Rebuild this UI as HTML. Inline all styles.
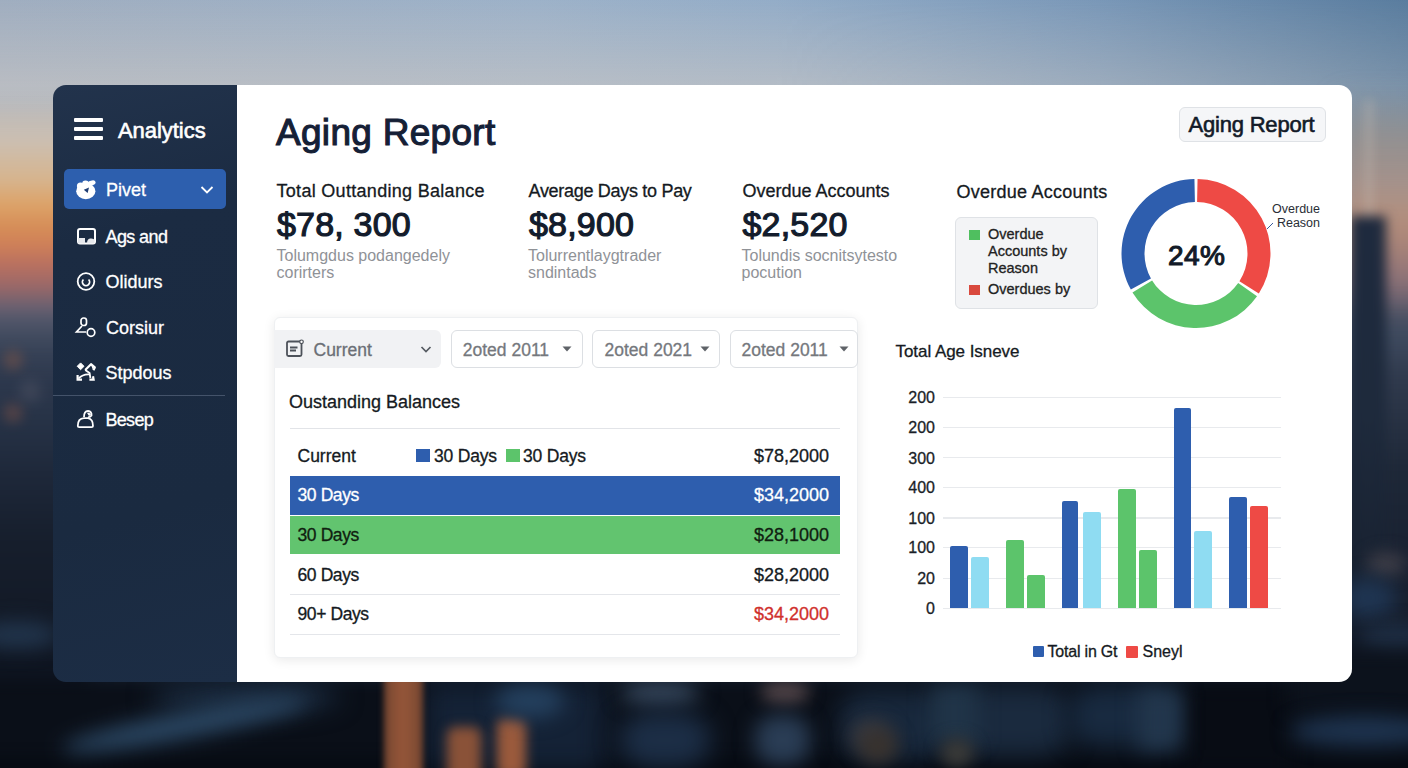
<!DOCTYPE html>
<html><head><meta charset="utf-8">
<style>
*{margin:0;padding:0;box-sizing:border-box}
html,body{width:1408px;height:768px;overflow:hidden;background:#0f1826}
body{position:relative;font-family:"Liberation Sans",sans-serif}
#bg{position:absolute;left:0;top:0;width:1408px;height:768px;overflow:hidden;background:#16202f}
.b{position:absolute}
.t{position:absolute;line-height:1;white-space:nowrap;-webkit-text-stroke-width:.3px}
#side{position:absolute;left:53px;top:85px;width:184px;height:597px;background:linear-gradient(165deg,#22334c 0%,#1b2b42 25%,#1a2a40 70%,#1c2d45 100%);border-radius:13px 0 0 13px}
#main{position:absolute;left:237px;top:85px;width:1115px;height:597px;background:#fff;border-radius:0 13px 13px 0}
</style></head><body>
<div id="bg">
<div class="b" style="left:0;top:0;width:1408px;height:330px;background:linear-gradient(90deg,#a0aec0 0%,#9db2c9 38%,#94adc8 55%,#7a98b8 78%,#5a7d9f 100%)"></div>
<div class="b" style="left:0;top:0;width:1408px;height:330px;background:linear-gradient(180deg,rgba(205,200,196,0) 0px,rgba(205,200,196,.55) 85px,rgba(200,190,180,.6) 140px);-webkit-mask-image:linear-gradient(90deg,#000 0%,#000 55%,rgba(0,0,0,.5) 100%)"></div>
<div class="b" style="left:-40px;top:100px;width:200px;height:290px;filter:blur(5px);background:linear-gradient(180deg,rgba(185,188,192,0) 0px,#c4bcb4 25px,#cbbfb2 40px,#d6b48e 79px,#dca268 105px,#d68e58 126px,#cf8058 144px,#b87060 165px,#9a6868 186px,#6a6070 207px,#4e5468 222px,#3e485c 240px,#343f54 260px,#2f3a4f 290px)"></div>
<div class="b" style="left:1336px;top:90px;width:130px;height:290px;filter:blur(12px);background:linear-gradient(180deg,rgba(130,135,145,0) 0px,rgba(150,144,140,.8) 45px,#a8928a 100px,#b4907e 125px,#ac8678 150px,#8e7278 190px,#5e5c6c 222px,#404a5e 252px,#36425a 290px)"></div>
<div class="b" style="left:1364px;top:100px;width:10px;height:130px;filter:blur(5px);background:rgba(200,190,180,.3)"></div>
<div class="b" style="left:-60px;top:372px;width:150px;height:460px;filter:blur(10px);background:linear-gradient(180deg,#2f3a4f 0px,#263246 50px,#1e283a 100px,#161e2c 168px,#131a27 240px,#0e1420 300px,#0b111b 400px)"></div>
<div class="b" style="left:1320px;top:300px;width:126px;height:510px;filter:blur(8px);background:linear-gradient(180deg,rgba(70,76,90,0) 0px,#3e4a5e 40px,#323c50 70px,#2a3446 110px,#1e2838 170px,#1a2232 250px,#161e2c 330px,#121a26 420px)"></div>
<div class="b" style="left:1350px;top:216px;width:36px;height:600px;filter:blur(6px);background:linear-gradient(180deg,#1e2a3e 0px,#1e2a3c 200px,#1a2434 320px,#141c2a 420px,#0e1520 500px)"></div>
<div class="b" style="left:-25px;top:622px;width:85px;height:26px;border-radius:50%;background:#22364e;filter:blur(10px)"></div>
<div class="b" style="left:3px;top:350px;width:20px;height:20px;border-radius:50%;background:#7a5448;filter:blur(6px);opacity:.55"></div>
<div class="b" style="left:3px;top:403px;width:20px;height:20px;border-radius:50%;background:#7a5046;filter:blur(6px);opacity:.5"></div>
<div class="b" style="left:20px;top:380px;width:20px;height:22px;border-radius:50%;background:#4e5262;filter:blur(7px);opacity:.6"></div>
<div class="b" style="left:1366px;top:552px;width:40px;height:24px;border-radius:50%;background:#3c3c46;filter:blur(8px)"></div>
<div class="b" style="left:1340px;top:578px;width:56px;height:40px;border-radius:50%;background:#1f3552;filter:blur(10px)"></div>
<div class="b" style="left:1360px;top:624px;width:70px;height:28px;border-radius:50%;background:#1e2e44;filter:blur(9px)"></div>
<div class="b" style="left:-40px;top:680px;width:1500px;height:120px;background:#0a0f18;filter:blur(8px)"></div>
<div class="b" style="left:-20px;top:756px;width:1450px;height:30px;background:#070b13;filter:blur(6px)"></div>
<div class="b" style="left:150px;top:682px;width:190px;height:30px;border-radius:50%;background:#1a2b40;filter:blur(12px)"></div>
<div class="b" style="left:60px;top:712px;width:250px;height:26px;border-radius:50%;background:#2a4662;filter:blur(10px);transform:rotate(-11deg)"></div>
<div class="b" style="left:425px;top:682px;width:180px;height:90px;background:#142236;filter:blur(14px)"></div>
<div class="b" style="left:384px;top:676px;width:39px;height:110px;background:repeating-linear-gradient(180deg,rgba(0,0,0,0) 0px,rgba(0,0,0,0) 4px,rgba(40,20,10,.25) 4px,rgba(40,20,10,.25) 6px),linear-gradient(90deg,#7a4a34,#9c5a3c 40%,#9a5a3c 60%,#7a4a34);filter:blur(3px)"></div>
<div class="b" style="left:447px;top:727px;width:34px;height:60px;border-radius:8px;background:#8a5238;filter:blur(6px)"></div>
<div class="b" style="left:497px;top:718px;width:29px;height:60px;border-radius:8px;background:#9a5a3c;filter:blur(6px)"></div>
<div class="b" style="left:495px;top:684px;width:70px;height:34px;border-radius:50%;background:#24405e;filter:blur(10px)"></div>
<div class="b" style="left:620px;top:680px;width:80px;height:26px;border-radius:50%;background:#34455a;filter:blur(10px)"></div>
<div class="b" style="left:620px;top:712px;width:90px;height:56px;border-radius:40%;background:#1c2e46;filter:blur(12px)"></div>
<div class="b" style="left:760px;top:680px;width:50px;height:24px;border-radius:50%;background:#4e4246;filter:blur(8px)"></div>
<div class="b" style="left:755px;top:715px;width:55px;height:50px;border-radius:40%;background:#2a3d55;filter:blur(10px)"></div>
<div class="b" style="left:840px;top:690px;width:110px;height:70px;border-radius:30%;background:#18283c;filter:blur(12px)"></div>
<div class="b" style="left:850px;top:720px;width:40px;height:30px;border-radius:50%;background:#3a3a40;filter:blur(10px)"></div>
<div class="b" style="left:950px;top:686px;width:120px;height:70px;border-radius:30%;background:#1a2a3e;filter:blur(12px)"></div>
<div class="b" style="left:1070px;top:686px;width:110px;height:60px;border-radius:30%;background:#182a40;filter:blur(12px)"></div>
<div class="b" style="left:1185px;top:684px;width:105px;height:90px;background:#080c14;filter:blur(10px)"></div>
<div class="b" style="left:1290px;top:650px;width:140px;height:60px;background:#0c121c;filter:blur(10px)"></div>
<div class="b" style="left:930px;top:684px;width:48px;height:60px;background:#203448;filter:blur(10px)"></div>
<div class="b" style="left:940px;top:738px;width:34px;height:30px;border-radius:50%;background:#3a3a38;filter:blur(8px)"></div>
<div class="b" style="left:858px;top:728px;width:40px;height:36px;border-radius:50%;background:#38322e;filter:blur(9px)"></div>
<div class="b" style="left:1138px;top:690px;width:44px;height:60px;background:#22364c;filter:blur(10px)"></div>
<div class="b" style="left:1290px;top:716px;width:150px;height:30px;border-radius:50%;background:#1e3450;filter:blur(10px)"></div>
</div>
<div id="side"></div>
<div id="main"></div>
<div class="b" style="left:74px;top:118px;width:29px;height:4px;border-radius:1px;background:#fff"></div>
<div class="b" style="left:74px;top:127px;width:29px;height:4px;border-radius:1px;background:#fff"></div>
<div class="b" style="left:74px;top:136px;width:29px;height:4px;border-radius:1px;background:#fff"></div>
<div class="t" style="left:118px;top:120.00px;font-size:22px;color:#fff;-webkit-text-stroke:.6px #fff;letter-spacing:-.05px">Analytics</div>
<div class="b" style="left:64px;top:169px;width:162px;height:40px;border-radius:5px;background:#2d5fae"></div>
<svg class="b" style="left:74px;top:178px" width="24" height="22" viewBox="0 0 24 22">
<ellipse cx="11.8" cy="13.2" rx="9.6" ry="8" fill="#fff"/>
<circle cx="6.5" cy="8" r="3.6" fill="#fff"/>
<circle cx="11.5" cy="5.8" r="3.4" fill="#fff"/>
<ellipse cx="17.5" cy="5" rx="4.2" ry="2.4" transform="rotate(-15 17.5 5)" fill="#fff"/>
<path d="M9.8 11.8 L15 9.6 L13.6 15 Z" fill="#1f3e74"/>
</svg>
<div class="t" style="left:106px;top:181.00px;font-size:18px;color:#fff;">Pivet</div>
<svg class="b" style="left:200px;top:185px" width="14" height="10" viewBox="0 0 14 10"><path d="M1.5 2 L7 7.5 L12.5 2" fill="none" stroke="#fff" stroke-width="1.8"/></svg>
<svg class="b" style="left:76px;top:227px" width="20" height="18" viewBox="0 0 20 18">
<rect x="2" y="2" width="17" height="14.5" rx="2" fill="none" stroke="#fff" stroke-width="2"/>
<rect x="2" y="11" width="7" height="5.5" fill="#e6e8ec"/>
<path d="M11 16.5 Q11 12 14 11.5 Q18 11 18.5 13 L18.5 16.5 Z" fill="#e6e8ec"/>
</svg>
<div class="t" style="left:105.5px;top:228.00px;font-size:18px;color:#fff;letter-spacing:-.6px">Ags and</div>
<svg class="b" style="left:75px;top:271px" width="22" height="22" viewBox="0 0 22 22">
<circle cx="11" cy="10.5" r="8.3" fill="none" stroke="#fff" stroke-width="1.8"/>
<path d="M8.4 8.5 A3.6 3.6 0 1 0 13.6 8.5" fill="none" stroke="#fff" stroke-width="1.8"/>
</svg>
<div class="t" style="left:105.5px;top:273.00px;font-size:18px;color:#fff;">Olidurs</div>
<svg class="b" style="left:74px;top:315px" width="24" height="24" viewBox="0 0 24 24">
<rect x="7" y="3" width="5.5" height="7.5" rx="2.5" fill="none" stroke="#fff" stroke-width="1.7"/>
<path d="M8 11 L2.5 17 L12 17" fill="none" stroke="#fff" stroke-width="1.7"/>
<circle cx="17" cy="17.5" r="3.8" fill="none" stroke="#fff" stroke-width="1.7"/>
</svg>
<div class="t" style="left:106px;top:319.00px;font-size:18px;color:#fff;">Corsiur</div>
<svg class="b" style="left:74px;top:361px" width="24" height="22" viewBox="0 0 24 22">
<path d="M3.2 5.3 L6.6 1.9 L10 5.3 L6.6 8.7 Z" fill="#fff" stroke="#fff" stroke-width="1" stroke-linejoin="round"/>
<path d="M11.2 9 L17 3.2 L20.8 6.4 L19.4 9.2" fill="none" stroke="#fff" stroke-width="2.2" stroke-linejoin="round"/>
<path d="M17 3.5 L20 6.3 L18.6 8.2 Z" fill="#fff"/>
<path d="M11.2 9 L15.6 12 L16.4 17" fill="none" stroke="#fff" stroke-width="1.8"/>
<path d="M16 13.4 Q9 12.6 4.5 17.5" fill="none" stroke="#fff" stroke-width="1.8"/>
<path d="M3.6 14 L3.6 18.6 L8 18.6" fill="none" stroke="#fff" stroke-width="2.2"/>
<path d="M15.4 18.6 L19.6 18.6 L19 15.2" fill="none" stroke="#fff" stroke-width="2.2"/>
</svg>
<div class="t" style="left:105.5px;top:364.00px;font-size:18px;color:#fff;">Stpdous</div>
<div class="b" style="left:53px;top:395px;width:172px;height:1px;background:#44536a"></div>
<svg class="b" style="left:75px;top:408px" width="22" height="22" viewBox="0 0 22 22">
<path d="M9 9 Q9 3 13 3 Q17 3.5 16.5 7.5 Q15 9.5 13 9" fill="none" stroke="#fff" stroke-width="1.8"/>
<path d="M12 5 Q15 4 16 7 L14 8 Z" fill="#fff"/>
<path d="M2.8 18 Q2.8 10.5 9 10.2 L13 10.2 Q18 11 18 18 Q18 19.2 16.5 19.2 L4.2 19.2 Q2.8 19.2 2.8 18 Z" fill="none" stroke="#fff" stroke-width="1.8"/>
</svg>
<div class="t" style="left:105.5px;top:411.00px;font-size:18px;color:#fff;letter-spacing:-.7px">Besep</div>
<div class="t" style="left:276px;top:114.00px;font-size:37px;color:#152036;-webkit-text-stroke:1.1px #152036;letter-spacing:.3px">Aging Report</div>
<div class="b" style="left:1179px;top:107px;width:147px;height:35px;border-radius:6px;background:#f5f6f8;border:1px solid #dfe2e6"></div>
<div class="t" style="left:1188.5px;top:114.00px;font-size:22px;color:#121a28;letter-spacing:-.2px;-webkit-text-stroke-width:.6px">Aging Report</div>
<div class="t" style="left:276.5px;top:182.00px;font-size:18px;color:#151a22;letter-spacing:.3px">Total Outtanding Balance</div>
<div class="t" style="left:277px;top:207.00px;font-size:34px;color:#131c2c;-webkit-text-stroke:1.2px #131c2c;letter-spacing:.2px">$78, 300</div>
<div class="t" style="left:276.5px;top:248.00px;font-size:16px;color:#8f9297;-webkit-text-stroke-width:0">Tolumgdus podangedely</div>
<div class="t" style="left:276.5px;top:265.00px;font-size:16px;color:#8f9297;-webkit-text-stroke-width:0">corirters</div>
<div class="t" style="left:528.5px;top:182.00px;font-size:18px;color:#151a22;letter-spacing:-.3px">Average Days to Pay</div>
<div class="t" style="left:529px;top:207.00px;font-size:34px;color:#131c2c;-webkit-text-stroke:1.2px #131c2c;letter-spacing:.2px">$8,900</div>
<div class="t" style="left:528px;top:248.00px;font-size:16px;color:#8f9297;-webkit-text-stroke-width:0">Tolurrentlaygtrader</div>
<div class="t" style="left:528px;top:265.00px;font-size:16px;color:#8f9297;-webkit-text-stroke-width:0">sndintads</div>
<div class="t" style="left:742.5px;top:182.00px;font-size:18px;color:#151a22;">Overdue Accounts</div>
<div class="t" style="left:742.5px;top:207.00px;font-size:34px;color:#131c2c;-webkit-text-stroke:1.2px #131c2c;letter-spacing:.2px">$2,520</div>
<div class="t" style="left:741.5px;top:248.00px;font-size:16px;color:#8f9297;-webkit-text-stroke-width:0">Tolundis socnitsytesto</div>
<div class="t" style="left:741.5px;top:265.00px;font-size:16px;color:#8f9297;-webkit-text-stroke-width:0">pocution</div>
<div class="t" style="left:956.5px;top:183.00px;font-size:18px;color:#151a22;letter-spacing:.25px">Overdue Accounts</div>
<div class="b" style="left:955px;top:217px;width:143px;height:92px;border-radius:6px;background:#f3f4f6;border:1px solid #dfe2e6"></div>
<div class="b" style="left:969px;top:230px;width:11px;height:10px;background:#4fbf5f"></div>
<div class="b" style="left:969px;top:285px;width:11px;height:10px;background:#d9493e"></div>
<div class="t" style="left:988px;top:227.00px;font-size:14.5px;color:#222;">Overdue</div>
<div class="t" style="left:988px;top:244.00px;font-size:14.5px;color:#222;">Accounts by</div>
<div class="t" style="left:988px;top:261.00px;font-size:14.5px;color:#222;">Reason</div>
<div class="t" style="left:988px;top:282.00px;font-size:14.5px;color:#222;">Overdues by</div>
<svg class="b" style="left:0;top:0" width="1408" height="768"><path d="M1197.56 179.02 A74.5 74.5 0 0 1 1258.83 293.53 L1239.43 281.17 A51.5 51.5 0 0 0 1197.08 202.01 Z" fill="#ee4a45"/><path d="M1257.03 296.23 A74.5 74.5 0 0 1 1132.48 292.43 L1152.09 280.41 A51.5 51.5 0 0 0 1238.19 283.04 Z" fill="#5cc46b"/><path d="M1130.84 289.62 A74.5 74.5 0 0 1 1194.44 179.02 L1194.92 202.01 A51.5 51.5 0 0 0 1150.96 278.47 Z" fill="#2e5eae"/><path d="M1267 229 L1273 223" stroke="#3a5c9a" stroke-width="1"/></svg>
<div class="t" style="left:1168px;top:242.00px;font-size:28px;color:#121a28;-webkit-text-stroke-width:1.1px;letter-spacing:.4px">24%</div>
<div class="t" style="right:88px;top:203.00px;font-size:12.5px;color:#2a2e36;text-align:right;-webkit-text-stroke-width:0">Overdue</div>
<div class="t" style="right:88px;top:217.00px;font-size:12.5px;color:#2a2e36;text-align:right;-webkit-text-stroke-width:0">Reason</div>
<div class="b" style="left:274px;top:317px;width:584px;height:341px;border-radius:6px;background:#fff;box-shadow:0 2px 12px rgba(0,0,0,.09);border:1px solid #eef0f2"></div>
<div class="b" style="left:274px;top:330px;width:167px;height:38px;border-radius:0 6px 6px 0;background:#f1f2f4"></div>
<svg class="b" style="left:285px;top:339px" width="20" height="19" viewBox="0 0 20 19">
<rect x="2" y="2.5" width="14.5" height="14.5" rx="1.5" fill="none" stroke="#4d525a" stroke-width="1.8"/>
<path d="M5 8.5 L12.5 8.5 M5 11.5 L11 11.5" stroke="#4d525a" stroke-width="1.8"/>
<circle cx="16.5" cy="2.8" r="1.8" fill="#fff" stroke="#4d525a" stroke-width="1.2"/>
</svg>
<div class="t" style="left:313.5px;top:342.00px;font-size:17.5px;color:#6b6f76;">Current</div>
<svg class="b" style="left:420px;top:345px" width="12" height="9" viewBox="0 0 12 9"><path d="M1.5 2 L6 6.5 L10.5 2" fill="none" stroke="#555a61" stroke-width="1.7"/></svg>
<div class="b" style="left:451px;top:330px;width:132px;height:38px;border-radius:6px;background:#fff;border:1px solid #dcdfe3"></div>
<div class="t" style="left:462.8px;top:342.00px;font-size:17.5px;color:#75787d;">2oted 2011</div>
<svg class="b" style="left:562px;top:346px" width="10" height="6" viewBox="0 0 10 6"><path d="M0.5 0.5 L9.5 0.5 L5 5.5 Z" fill="#5f6368"/></svg>
<div class="b" style="left:592px;top:330px;width:128px;height:38px;border-radius:6px;background:#fff;border:1px solid #dcdfe3"></div>
<div class="t" style="left:604.5px;top:342.00px;font-size:17.5px;color:#75787d;">2oted 2021</div>
<svg class="b" style="left:699.5px;top:346px" width="10" height="6" viewBox="0 0 10 6"><path d="M0.5 0.5 L9.5 0.5 L5 5.5 Z" fill="#5f6368"/></svg>
<div class="b" style="left:730px;top:330px;width:128px;height:38px;border-radius:6px;background:#fff;border:1px solid #dcdfe3"></div>
<div class="t" style="left:741.5px;top:342.00px;font-size:17.5px;color:#75787d;">2oted 2011</div>
<svg class="b" style="left:839px;top:346px" width="10" height="6" viewBox="0 0 10 6"><path d="M0.5 0.5 L9.5 0.5 L5 5.5 Z" fill="#5f6368"/></svg>
<div class="t" style="left:289px;top:393.00px;font-size:18px;color:#151a22;">Oustanding Balances</div>
<div class="b" style="left:290px;top:427.5px;width:550px;height:1.5px;background:#e2e4e8"></div>
<div class="t" style="left:297.5px;top:448.00px;font-size:17.5px;color:#151a22;">Current</div>
<div class="b" style="left:416px;top:449px;width:14px;height:13px;background:#2e5eae"></div>
<div class="t" style="left:434px;top:448.00px;font-size:17.5px;color:#151a22;letter-spacing:-.2px">30 Days</div>
<div class="b" style="left:506px;top:449px;width:14px;height:13px;background:#5cc46b"></div>
<div class="t" style="left:523px;top:448.00px;font-size:17.5px;color:#151a22;letter-spacing:-.2px">30 Days</div>
<div class="t" style="right:579px;top:447.00px;font-size:18px;color:#151a22;text-align:right;">$78,2000</div>
<div class="b" style="left:290px;top:476px;width:550px;height:39px;background:#2e5eae"></div>
<div class="b" style="left:290px;top:516px;width:550px;height:38px;background:#62c46f"></div>
<div class="t" style="left:297.5px;top:487.00px;font-size:17.5px;color:#fff;letter-spacing:-.4px">30 Days</div>
<div class="t" style="right:579px;top:486.00px;font-size:18px;color:#fff;text-align:right;">$34,2000</div>
<div class="t" style="left:297.5px;top:527.00px;font-size:17.5px;color:#102010;letter-spacing:-.4px">30 Days</div>
<div class="t" style="right:579px;top:526.00px;font-size:18px;color:#102010;text-align:right;">$28,1000</div>
<div class="t" style="left:297.5px;top:567.00px;font-size:17.5px;color:#151a22;letter-spacing:-.4px">60 Days</div>
<div class="t" style="right:579px;top:566.00px;font-size:18px;color:#151a22;text-align:right;">$28,2000</div>
<div class="b" style="left:290px;top:594px;width:550px;height:1.2px;background:#e4e6ea"></div>
<div class="t" style="left:297.5px;top:606.00px;font-size:17.5px;color:#151a22;letter-spacing:-.4px">90+ Days</div>
<div class="t" style="right:579px;top:605.00px;font-size:18px;color:#d0302c;text-align:right;">$34,2000</div>
<div class="b" style="left:290px;top:634px;width:550px;height:1.2px;background:#e4e6ea"></div>
<div class="t" style="left:895.5px;top:343.00px;font-size:17px;color:#151a22;letter-spacing:-.05px">Total Age Isneve</div>
<div class="b" style="left:943px;top:397.0px;width:338px;height:1.2px;background:#e8eaed"></div>
<div class="t" style="right:473px;top:390.00px;font-size:16px;color:#1a1f28;text-align:right;">200</div>
<div class="b" style="left:943px;top:427.1px;width:338px;height:1.2px;background:#e8eaed"></div>
<div class="t" style="right:473px;top:420.00px;font-size:16px;color:#1a1f28;text-align:right;">200</div>
<div class="b" style="left:943px;top:457.2px;width:338px;height:1.2px;background:#e8eaed"></div>
<div class="t" style="right:473px;top:451.00px;font-size:16px;color:#1a1f28;text-align:right;">300</div>
<div class="b" style="left:943px;top:486.9px;width:338px;height:1.2px;background:#e8eaed"></div>
<div class="t" style="right:473px;top:480.00px;font-size:16px;color:#1a1f28;text-align:right;">400</div>
<div class="b" style="left:943px;top:517.4px;width:338px;height:1.2px;background:#e8eaed"></div>
<div class="t" style="right:473px;top:511.00px;font-size:16px;color:#1a1f28;text-align:right;">100</div>
<div class="b" style="left:943px;top:547.1px;width:338px;height:1.2px;background:#e8eaed"></div>
<div class="t" style="right:473px;top:540.00px;font-size:16px;color:#1a1f28;text-align:right;">100</div>
<div class="b" style="left:943px;top:577.5px;width:338px;height:1.2px;background:#e8eaed"></div>
<div class="t" style="right:473px;top:571.00px;font-size:16px;color:#1a1f28;text-align:right;">20</div>
<div class="b" style="left:943px;top:607.6px;width:338px;height:1.2px;background:#e8eaed"></div>
<div class="t" style="right:473px;top:601.00px;font-size:16px;color:#1a1f28;text-align:right;">0</div>
<div class="b" style="left:950.3px;top:546.1px;width:17.6px;height:62.1px;border-radius:2px 2px 0 0;background:#2e5eae"></div>
<div class="b" style="left:971.0px;top:556.6px;width:17.6px;height:51.6px;border-radius:2px 2px 0 0;background:#8fdcf2"></div>
<div class="b" style="left:1005.8px;top:540.2px;width:18.0px;height:68.0px;border-radius:2px 2px 0 0;background:#5cc46b"></div>
<div class="b" style="left:1027.3px;top:575.0px;width:17.6px;height:33.2px;border-radius:2px 2px 0 0;background:#5cc46b"></div>
<div class="b" style="left:1061.7px;top:501.2px;width:16.8px;height:107.0px;border-radius:2px 2px 0 0;background:#2e5eae"></div>
<div class="b" style="left:1082.5px;top:512.0px;width:18.0px;height:96.2px;border-radius:2px 2px 0 0;background:#8fdcf2"></div>
<div class="b" style="left:1117.6px;top:488.6px;width:18.0px;height:119.6px;border-radius:2px 2px 0 0;background:#5cc46b"></div>
<div class="b" style="left:1139.1px;top:550.2px;width:17.6px;height:58.0px;border-radius:2px 2px 0 0;background:#5cc46b"></div>
<div class="b" style="left:1173.5px;top:408.1px;width:17.5px;height:200.1px;border-radius:2px 2px 0 0;background:#2e5eae"></div>
<div class="b" style="left:1194.2px;top:530.7px;width:18.3px;height:77.5px;border-radius:2px 2px 0 0;background:#8fdcf2"></div>
<div class="b" style="left:1229.0px;top:497.1px;width:17.9px;height:111.1px;border-radius:2px 2px 0 0;background:#2e5eae"></div>
<div class="b" style="left:1249.6px;top:505.7px;width:18.4px;height:102.5px;border-radius:2px 2px 0 0;background:#ee4a45"></div>
<div class="b" style="left:1033px;top:645.5px;width:11px;height:11.5px;border-radius:1px;background:#2e5eae"></div>
<div class="t" style="left:1047.5px;top:644.00px;font-size:16px;color:#151a22;letter-spacing:-.2px">Total in Gt</div>
<div class="b" style="left:1126px;top:645.5px;width:12px;height:12px;border-radius:1px;background:#ee4a45"></div>
<div class="t" style="left:1142.5px;top:644.00px;font-size:16px;color:#151a22;">Sneyl</div>

</body></html>
